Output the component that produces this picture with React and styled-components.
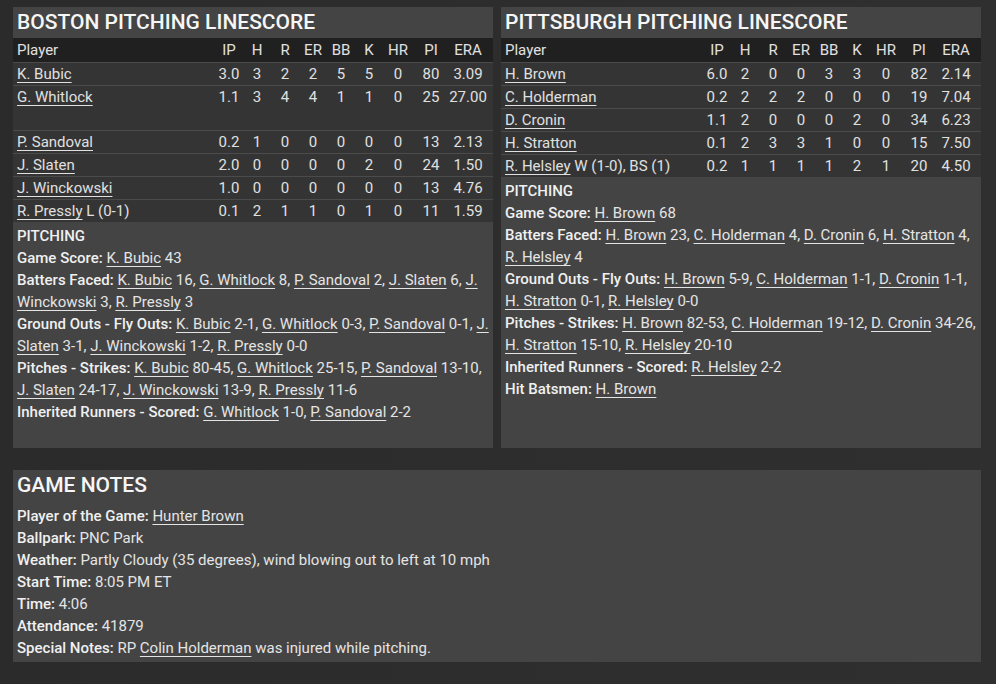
import styled, { createGlobalStyle } from 'styled-components';

const GlobalStyle = createGlobalStyle`
	body {
		margin: 0;
		background: #2b2b2b;
		font-family: Roboto, "Liberation Sans", sans-serif;
		color: #e6e6e6;
	}
`;

const Page = styled.div`
	padding: 7px 15px 22px 13px;
	min-height: 100vh;
	box-sizing: border-box;
	background: linear-gradient(90deg, #2b2b2b, #2f2f2f);
`;

const Columns = styled.div`
	display: grid;
	grid-template-columns: 480px 480px;
	gap: 8px;
	height: 441px;
`;

const Panel = styled.section`
	background: #444444;
	display: flex;
	flex-direction: column;
`;

const NotesPanel = styled(Panel)`
	margin-top: 22px;
	height: 192px;
	padding-bottom: 3px;
	box-sizing: border-box;
`;

const Title = styled.h2`
	margin: 0;
	height: 31px;
	line-height: 31px;
	padding: 0 4px;
	font-size: 21px;
	font-weight: 500;
	color: #f6f6f6;
`;

const STAT_COLS = '1fr 28px 28px 28px 28px 28px 28px 30px 36px 38px';

const HeadRow = styled.div`
	display: grid;
	grid-template-columns: ${STAT_COLS};
	padding: 0 6px 0 4px;
	height: 24px;
	align-items: center;
	background: #202020;
	font-size: 15px;
	color: #e0e0e0;
`;

const Row = styled.div`
	display: grid;
	grid-template-columns: ${STAT_COLS};
	padding: 0 6px 0 4px;
	height: ${p => (p.$tall ? 44 : 22)}px;
	align-items: start;
	line-height: 22px;
	background: #343434;
	border-top: 1px solid #4b4b4b;
	font-size: 15px;
	color: #e0e0e0;
`;

const Cell = styled.span`
	text-align: center;
	white-space: nowrap;
`;

const NameCell = styled.span`
	white-space: nowrap;
`;

const Link = styled.a`
	color: inherit;
	text-decoration: underline;
	text-underline-offset: 3px;
	text-decoration-thickness: 1px;
`;

const Details = styled.div`
	flex: 1;
	padding: 3px 4px 4px;
	font-size: 15px;
	line-height: 22px;
	color: #e4e4e4;
`;

const SubHead = styled.div`
	font-weight: 500;
	color: #f0f0f0;
`;

const Label = styled.span`
	font-weight: 500;
	color: #f0f0f0;
`;

const NotesBody = styled.div`
	padding: 4px 4px 0;
	font-size: 15px;
	line-height: 22px;
	color: #e4e4e4;
`;

const HEAD = ['IP', 'H', 'R', 'ER', 'BB', 'K', 'HR', 'PI', 'ERA'];

const boston = [
	{ name: 'K. Bubic', stats: ['3.0', 3, 2, 2, 5, 5, 0, 80, '3.09'] },
	{ name: 'G. Whitlock', stats: ['1.1', 3, 4, 4, 1, 1, 0, 25, '27.00'], tall: true },
	{ name: 'P. Sandoval', stats: ['0.2', 1, 0, 0, 0, 0, 0, 13, '2.13'] },
	{ name: 'J. Slaten', stats: ['2.0', 0, 0, 0, 0, 2, 0, 24, '1.50'] },
	{ name: 'J. Winckowski', stats: ['1.0', 0, 0, 0, 0, 0, 0, 13, '4.76'] },
	{ name: 'R. Pressly', note: ' L (0-1)', stats: ['0.1', 2, 1, 1, 0, 1, 0, 11, '1.59'] },
];

const pittsburgh = [
	{ name: 'H. Brown', stats: ['6.0', 2, 0, 0, 3, 3, 0, 82, '2.14'] },
	{ name: 'C. Holderman', stats: ['0.2', 2, 2, 2, 0, 0, 0, 19, '7.04'] },
	{ name: 'D. Cronin', stats: ['1.1', 2, 0, 0, 0, 2, 0, 34, '6.23'] },
	{ name: 'H. Stratton', stats: ['0.1', 2, 3, 3, 1, 0, 0, 15, '7.50'] },
	{ name: 'R. Helsley', note: ' W (1-0), BS (1)', stats: ['0.2', 1, 1, 1, 1, 2, 1, 20, '4.50'] },
];

// list of [name, value] pairs -> "Name value, Name value"
const Pairs = ({ items }) =>
	items.map(([name, val], i) => (
		<span key={name}>
			<Link href="#">{name}</Link> {val}
			{i < items.length - 1 ? ', ' : ''}
		</span>
	));

const Linescore = ({ team, rows, children }) => (
	<Panel>
		<Title>{team} PITCHING LINESCORE</Title>
		<HeadRow>
			<NameCell>Player</NameCell>
			{HEAD.map(h => (
				<Cell key={h}>{h}</Cell>
			))}
		</HeadRow>
		{rows.map(r => (
			<Row key={r.name} $tall={r.tall}>
				<NameCell>
					<Link href="#">{r.name}</Link>
					{r.note}
				</NameCell>
				{r.stats.map((s, i) => (
					<Cell key={i}>{s}</Cell>
				))}
			</Row>
		))}
		<Details>
			<SubHead>PITCHING</SubHead>
			{children}
		</Details>
	</Panel>
);

const App = () => {
	return (
		<Page>
			<GlobalStyle />
			<Columns>
				<Linescore team="BOSTON" rows={boston}>
					<div>
						<Label>Game Score:</Label> <Pairs items={[['K. Bubic', '43']]} />
					</div>
					<div>
						<Label>Batters Faced:</Label>{' '}
						<Pairs
							items={[
								['K. Bubic', '16'],
								['G. Whitlock', '8'],
								['P. Sandoval', '2'],
								['J. Slaten', '6'],
								['J. Winckowski', '3'],
								['R. Pressly', '3'],
							]}
						/>
					</div>
					<div>
						<Label>Ground Outs - Fly Outs:</Label>{' '}
						<Pairs
							items={[
								['K. Bubic', '2-1'],
								['G. Whitlock', '0-3'],
								['P. Sandoval', '0-1'],
								['J. Slaten', '3-1'],
								['J. Winckowski', '1-2'],
								['R. Pressly', '0-0'],
							]}
						/>
					</div>
					<div>
						<Label>Pitches - Strikes:</Label>{' '}
						<Pairs
							items={[
								['K. Bubic', '80-45'],
								['G. Whitlock', '25-15'],
								['P. Sandoval', '13-10'],
								['J. Slaten', '24-17'],
								['J. Winckowski', '13-9'],
								['R. Pressly', '11-6'],
							]}
						/>
					</div>
					<div>
						<Label>Inherited Runners - Scored:</Label>{' '}
						<Pairs
							items={[
								['G. Whitlock', '1-0'],
								['P. Sandoval', '2-2'],
							]}
						/>
					</div>
				</Linescore>

				<Linescore team="PITTSBURGH" rows={pittsburgh}>
					<div>
						<Label>Game Score:</Label> <Pairs items={[['H. Brown', '68']]} />
					</div>
					<div>
						<Label>Batters Faced:</Label>{' '}
						<Pairs
							items={[
								['H. Brown', '23'],
								['C. Holderman', '4'],
								['D. Cronin', '6'],
								['H. Stratton', '4'],
								['R. Helsley', '4'],
							]}
						/>
					</div>
					<div>
						<Label>Ground Outs - Fly Outs:</Label>{' '}
						<Pairs
							items={[
								['H. Brown', '5-9'],
								['C. Holderman', '1-1'],
								['D. Cronin', '1-1'],
								['H. Stratton', '0-1'],
								['R. Helsley', '0-0'],
							]}
						/>
					</div>
					<div>
						<Label>Pitches - Strikes:</Label>{' '}
						<Pairs
							items={[
								['H. Brown', '82-53'],
								['C. Holderman', '19-12'],
								['D. Cronin', '34-26'],
								['H. Stratton', '15-10'],
								['R. Helsley', '20-10'],
							]}
						/>
					</div>
					<div>
						<Label>Inherited Runners - Scored:</Label>{' '}
						<Pairs items={[['R. Helsley', '2-2']]} />
					</div>
					<div>
						<Label>Hit Batsmen:</Label> <Link href="#">H. Brown</Link>
					</div>
				</Linescore>
			</Columns>

			<NotesPanel>
				<Title>GAME NOTES</Title>
				<NotesBody>
					<div>
						<Label>Player of the Game:</Label> <Link href="#">Hunter Brown</Link>
					</div>
					<div>
						<Label>Ballpark:</Label> PNC Park
					</div>
					<div>
						<Label>Weather:</Label> Partly Cloudy (35 degrees), wind blowing out to left at 10 mph
					</div>
					<div>
						<Label>Start Time:</Label> 8:05 PM ET
					</div>
					<div>
						<Label>Time:</Label> 4:06
					</div>
					<div>
						<Label>Attendance:</Label> 41879
					</div>
					<div>
						<Label>Special Notes:</Label> RP <Link href="#">Colin Holderman</Link> was injured
						while pitching.
					</div>
				</NotesBody>
			</NotesPanel>
		</Page>
	);
};

export default App;
